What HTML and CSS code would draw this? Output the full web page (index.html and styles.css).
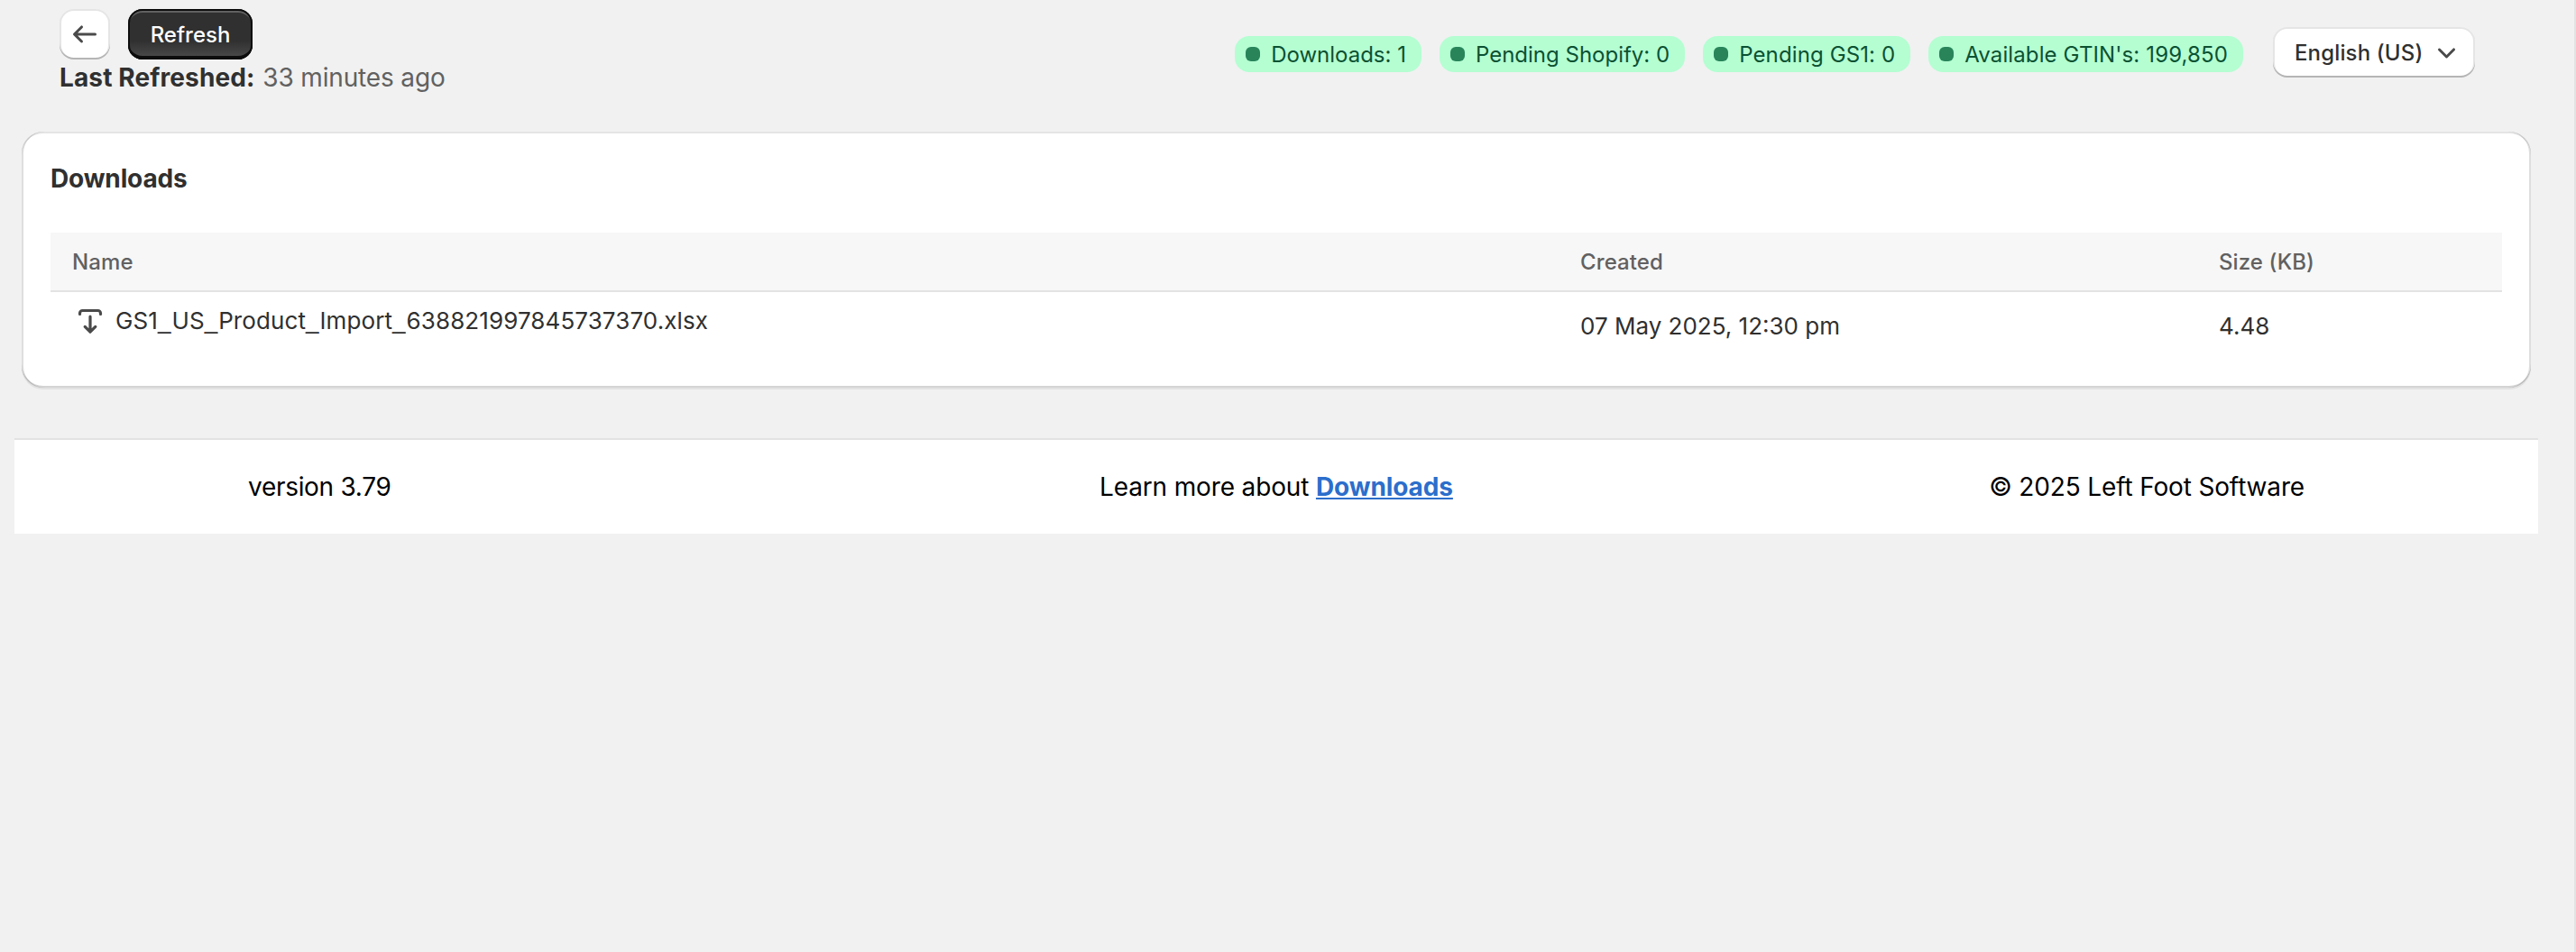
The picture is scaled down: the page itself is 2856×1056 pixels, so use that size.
FILE: index.html
```html
<!DOCTYPE html>
<html lang="en">
<head>
<meta charset="utf-8">
<title>Downloads</title>
<link rel="stylesheet" href="styles.css">
</head>
<body>
<header class="topbar">
  <div class="topbar-left">
    <div class="actions">
      <button class="btn btn-back" aria-label="Back">
        <svg class="icon" viewBox="0 0 20 20"><path fill-rule="evenodd" d="M16.5 10a.75.75 0 0 1-.75.75h-9.69l2.72 2.72a.75.75 0 0 1-1.06 1.06l-4-4a.75.75 0 0 1 0-1.06l4-4a.75.75 0 1 1 1.06 1.06l-2.72 2.72h9.69a.75.75 0 0 1 .75.75Z"/></svg>
      </button>
      <button class="btn btn-primary"><span class="label">Refresh</span></button>
    </div>
    <p class="refreshed"><strong>Last Refreshed:</strong> <span>33 minutes ago</span></p>
  </div>
  <div class="topbar-right">
    <span class="badge"><i class="dot"></i><span class="label">Downloads: 1</span></span>
    <span class="badge"><i class="dot"></i><span class="label">Pending Shopify: 0</span></span>
    <span class="badge badge-wide"><i class="dot"></i><span class="label">Pending GS1: 0</span></span>
    <span class="badge badge-wide"><i class="dot"></i><span class="label">Available GTIN's: 199,850</span></span>
    <button class="btn btn-language"><span class="label">English (US)</span>
      <svg class="icon" viewBox="0 0 20 20"><path fill-rule="evenodd" d="M5.72 8.47a.75.75 0 0 1 1.06 0l3.47 3.47 3.47-3.47a.75.75 0 1 1 1.06 1.06l-4 4a.75.75 0 0 1-1.06 0l-4-4a.75.75 0 0 1 0-1.06Z"/></svg>
    </button>
  </div>
</header>
<main class="card">
  <h2 class="card-title">Downloads</h2>
  <div class="row row-head"><span>Name</span><span>Created</span><span>Size (KB)</span></div>
  <div class="row row-body">
    <a class="file"><svg class="icon" viewBox="0 0 20 20"><path d="M4.25 6.25v-.5a1.5 1.5 0 0 1 1.5-1.5h8.5a1.5 1.5 0 0 1 1.5 1.5v.5M10 7.6v8.2M7.1 13.2 10 16.1l2.9-2.9" class="stroke"/></svg><span class="file-name">GS1<b>_</b>US<b>_</b>Product<b>_</b>Import<b>_</b>638821997845737370.xlsx</span></a>
    <span>07 May 2025, 12:30 pm</span><span>4.48</span>
  </div>
</main>
<footer class="footer">
  <span class="version">version 3.79</span>
  <span>Learn more about <a class="link" href="#">Downloads</a></span>
  <span>© 2025 Left Foot Software</span>
</footer>
</body>
</html>
```
FILE: styles.css
```css
* { box-sizing: border-box; }
body {
  margin: 0;
  min-height: 1056px;
  padding: 10px 40px 0 16px;
  background: #f1f1f1;
  border-right: 2px solid #e3e3e3;
  color: #303030;
  font-family: Inter, "Liberation Sans", sans-serif;
  font-size: 26px;
  line-height: 40px;
}
.topbar { display: flex; justify-content: space-between; height: 136px; padding: 0 70px 0 50px; }
.actions { display: flex; gap: 20px; }
.btn {
  display: flex; align-items: center; justify-content: center;
  height: 56px; padding: 0 24px; border: 0; border-radius: 16px;
  background: #fff; color: #303030;
  font: 550 24px/32px Inter, "Liberation Sans", sans-serif;
  box-shadow: inset 0 -2px 0 #b5b5b5, inset 0 0 0 2px rgba(0, 0, 0, .1);
}
.label { padding-top: 3px; }
.icon { width: 40px; height: 40px; fill: #4a4a4a; flex: none; }
.stroke { fill: none; stroke: #4a4a4a; stroke-width: 1.6; stroke-linecap: round; stroke-linejoin: round; }
.btn-back { width: 56px; padding: 0; }
.btn-primary {
  width: 138px; padding: 0 0 1px;
  background: linear-gradient(180deg, #303030 63%, #4d4d4d 100%);
  color: #fff;
  box-shadow: inset 0 0 0 2px #0d0d0d, inset 0 -4px 0 #0d0d0d, inset 0 4px 0 #616161;
}
.refreshed { margin: 0; font-size: 28px; color: #616161; letter-spacing: -.15px; }
.refreshed strong { margin-right: 1px; font-weight: 650; color: #303030; letter-spacing: .12px; }
.topbar-right { display: flex; align-items: center; align-self: flex-start; gap: 20px; margin-top: 20px; }
.badge {
  display: flex; align-items: center; gap: 12px; height: 40px;
  margin-top: 4px; padding: 0 17px 0 12px; border-radius: 16px;
  background: #b4fed2; color: #0c5132; font-size: 24px; line-height: 32px;
}
.badge-wide { letter-spacing: .12px; }
.badge .label { padding-top: 2px; }
.dot { width: 16px; height: 16px; border-radius: 6px; background: #29845a; }
.btn-language { margin-left: 13px; width: 224px; padding: 0 12px 2px 24px; justify-content: space-between; letter-spacing: .15px; }
.card {
  height: 284px; margin: 0 8px; padding: 32px; border-radius: 24px; background: #fff;
  box-shadow: 0 2px 0 rgba(26, 26, 26, .07), inset 2px 0 0 rgba(0, 0, 0, .13), inset -2px 0 0 rgba(0, 0, 0, .13), inset 0 -2px 0 rgba(0, 0, 0, .17), inset 0 2px 0 rgba(204, 204, 204, .5);
}
.card-title { margin: 0 0 40px; font-size: 28px; font-weight: 650; line-height: 40px; letter-spacing: -.15px; }
.row { display: grid; grid-template-columns: 1672px 708px 1fr; align-items: start; padding-left: 24px; }
.row-head { height: 66px; padding-top: 1px; background: #f7f7f7; border-bottom: 2px solid #e3e3e3; color: #616161; font-size: 24px; font-weight: 550; line-height: 64px; letter-spacing: .1px; }
.row-body { padding-top: 18px; }
.file { display: flex; align-items: center; gap: 8px; margin-top: -6px; }
.file-name { letter-spacing: .1px; }
.file-name b { font-family: "Liberation Sans", sans-serif; font-weight: 400; letter-spacing: 1px; }
.footer {
  display: grid; grid-template-columns: 1fr auto 1fr; align-items: center;
  height: 106px; margin-top: 56px; padding: 0 259px;
  background: #fff; border-top: 2px solid #e3e3e3; color: #000; font-size: 28px; letter-spacing: -.15px;
}
.footer > :last-child { justify-self: end; }
.footer > :first-child { justify-self: start; }
.version { letter-spacing: -.3px; }
.link { color: #2c6ecb; font-weight: 700; letter-spacing: -.1px; }
```
